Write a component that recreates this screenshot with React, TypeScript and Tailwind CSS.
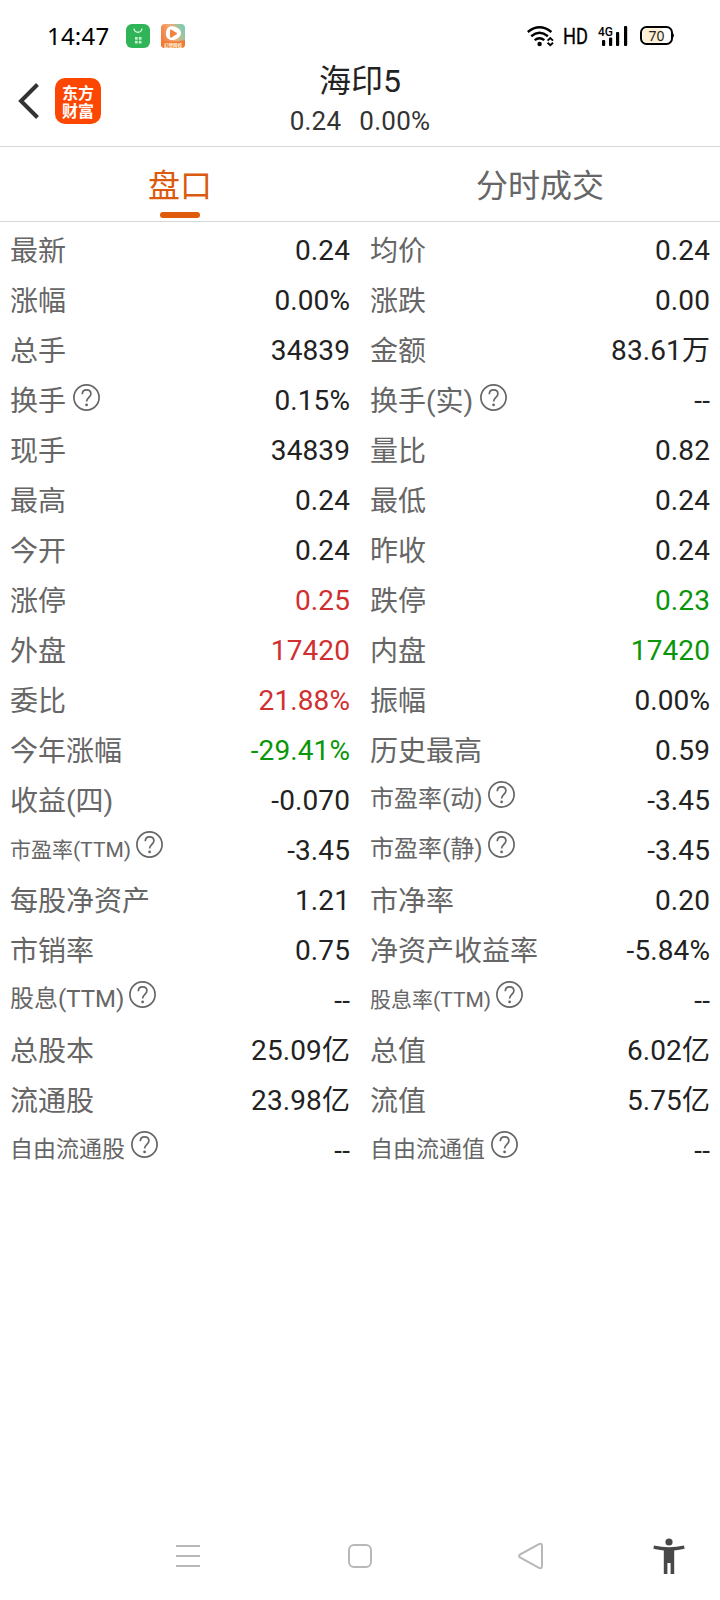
import { clsx } from "clsx"

type Cell = {
  label: string
  value: string
  tone?: "up" | "down"
  size?: "md" | "sm" | "xs"
  help?: boolean
}

const rows: [Cell, Cell][] = [
  [{ label: "最新", value: "0.24" }, { label: "均价", value: "0.24" }],
  [{ label: "涨幅", value: "0.00%" }, { label: "涨跌", value: "0.00" }],
  [{ label: "总手", value: "34839" }, { label: "金额", value: "83.61万" }],
  [{ label: "换手", value: "0.15%", help: true }, { label: "换手(实)", value: "--", help: true }],
  [{ label: "现手", value: "34839" }, { label: "量比", value: "0.82" }],
  [{ label: "最高", value: "0.24" }, { label: "最低", value: "0.24" }],
  [{ label: "今开", value: "0.24" }, { label: "昨收", value: "0.24" }],
  [{ label: "涨停", value: "0.25", tone: "up" }, { label: "跌停", value: "0.23", tone: "down" }],
  [{ label: "外盘", value: "17420", tone: "up" }, { label: "内盘", value: "17420", tone: "down" }],
  [{ label: "委比", value: "21.88%", tone: "up" }, { label: "振幅", value: "0.00%" }],
  [{ label: "今年涨幅", value: "-29.41%", tone: "down" }, { label: "历史最高", value: "0.59" }],
  [{ label: "收益(四)", value: "-0.070" }, { label: "市盈率(动)", value: "-3.45", size: "md", help: true }],
  [
    { label: "市盈率(TTM)", value: "-3.45", size: "xs", help: true },
    { label: "市盈率(静)", value: "-3.45", size: "md", help: true },
  ],
  [{ label: "每股净资产", value: "1.21" }, { label: "市净率", value: "0.20" }],
  [{ label: "市销率", value: "0.75" }, { label: "净资产收益率", value: "-5.84%" }],
  [
    { label: "股息(TTM)", value: "--", size: "md", help: true },
    { label: "股息率(TTM)", value: "--", size: "xs", help: true },
  ],
  [{ label: "总股本", value: "25.09亿" }, { label: "总值", value: "6.02亿" }],
  [{ label: "流通股", value: "23.98亿" }, { label: "流值", value: "5.75亿" }],
  [
    { label: "自由流通股", value: "--", size: "sm", help: true },
    { label: "自由流通值", value: "--", size: "sm", help: true },
  ],
]

function HelpIcon({ size }: { size?: Cell["size"] }) {
  return (
    <svg
      className={clsx(
        "shrink-0",
        !size && "mb-[7px] ml-[7px]",
        size === "sm" && "mb-[13px] ml-[6px]",
        (size === "md" || size === "xs") && "mb-[13px] ml-[5px]",
      )}
      width="27"
      height="27"
      viewBox="0 0 27 27"
      fill="none"
      stroke="#666"
      strokeWidth="1.7"
    >
      <circle cx="13.5" cy="13.5" r="12.6" />
      <path d="M9.3 10.2C9.3 7.500 11 5.800 13.600 5.800s4.300 1.700 4.300 4c0 3.400-4.300 3.900-4.300 7.800" />
      <circle cx="13.6" cy="20.9" r="1.4" fill="#666" stroke="none" />
    </svg>
  )
}

function QuoteCell({ label, value, tone, size, help }: Cell) {
  return (
    <div className="flex h-[50px] items-center justify-between px-[10px]">
      <div className="flex items-center whitespace-nowrap text-[#666]">
        <span
          className={clsx(
            !size && "mt-[1px] text-[28px]",
            size === "md" && "mb-[4px] text-[24px]",
            size === "sm" && "mb-[1px] text-[23px]",
            size === "xs" && "mb-[1px] text-[21px]",
          )}
        >
          {label}
        </span>
        {help && <HelpIcon size={size} />}
      </div>
      <span
        className={clsx(
          "text-[28px] tracking-[0.1px]",
          !tone && "text-[#222]",
          tone === "up" && "text-[#d03030]",
          tone === "down" && "text-[#0a960a]",
        )}
      >
        {value}
      </span>
    </div>
  )
}

function StatusBar() {
  return (
    <div className="flex h-[60px] items-center pt-3 pl-[47px] text-black">
      <span className="w-[79px] font-['Noto_Sans'] text-[24px] leading-none tracking-[0.2px]">14:47</span>
      <svg width="24" height="24" viewBox="0 0 24 24">
        <rect width="24" height="24" rx="6" fill="#2fb457" />
        <path d="M8 4.500c.8 5 7.200 5 8 0" fill="none" stroke="#d9f7df" strokeWidth="1.3" />
        <g fill="#c5f0cf">
          <rect x="9" y="13" width="2.700" height="2.700" />
          <rect x="12.800" y="13" width="2.700" height="2.700" />
          <rect x="9" y="16.800" width="2.700" height="2.700" />
          <rect x="12.800" y="16.800" width="2.700" height="2.700" />
        </g>
      </svg>
      <svg className="ml-[11px]" width="24" height="24" viewBox="0 0 24 24">
        <defs>
          <linearGradient id="video" x1="0" y1="0.6" x2="1" y2="0.2">
            <stop offset="0" stopColor="#f27a3c" />
            <stop offset="0.5" stopColor="#f3ab78" />
            <stop offset="1" stopColor="#6fd0b8" />
          </linearGradient>
        </defs>
        <rect width="24" height="24" rx="4" fill="url(#video)" />
        <path d="M0 16.500Q12 19 24 16v4a4 4 0 0 1-4 4H4a4 4 0 0 1-4-4z" fill="#ee7c37" />
        <path d="M9 2.500c5-1 11 2.500 11 6.500s-5 7.500-9.500 7S4.500 12 5 8.500s1.500-5.500 4-6z" fill="#fff" />
        <path d="M10 6.500l5 3-5 3.200z" fill="#f0843f" stroke="#f0843f" strokeWidth="2" strokeLinejoin="round" />
        <text x="12" y="22.600" textAnchor="middle" fontSize="4.500" fontWeight="700" fill="#fff3d8">
          幻想网校
        </text>
      </svg>
      <div className="ml-[342px] flex items-center">
        <svg width="27" height="21" viewBox="0 0 27 21" fill="none" stroke="#000" strokeWidth="2.400">
          <path d="M.8 6Q12.500-3.500 24.400 6" />
          <path d="M4.200 10.200Q12.500 3.400 20.900 10.200" />
          <path d="M7.700 14.200Q12.500 10.200 17.300 14.200" />
          <circle cx="12.600" cy="18" r="2.200" fill="#000" stroke="none" />
          <path d="M20.600 14.600l2.700-2.500 2.700 2.500M20.600 16.800l2.700 2.500 2.700-2.500" strokeWidth="1.900" />
        </svg>
        <svg className="ml-[8px]" width="28" height="40" viewBox="0 0 28 40">
          <text x="1" y="27.600" fontSize="22.500" stroke="#000" strokeWidth=".3" textLength="25" lengthAdjust="spacingAndGlyphs">
            HD
          </text>
        </svg>
        <svg className="ml-[8px]" width="30" height="30" viewBox="0 0 30 30">
          <text x="0" y="14.500" fontSize="13.500" fontWeight="500" textLength="15" lengthAdjust="spacingAndGlyphs">
            4G
          </text>
          <rect x="4" y="19" width="3.200" height="6" rx="1" />
          <rect x="11" y="16.500" width="3.200" height="8.500" rx="1" />
          <rect x="18" y="11" width="3.200" height="14" rx="1" />
          <rect x="26" y="5" width="3.200" height="20" rx="1" />
        </svg>
        <svg className="ml-[12px]" width="35" height="20" viewBox="0 0 35 20">
          <rect x="1" y="1" width="31" height="17" rx="5.500" fill="#fff" stroke="#000" strokeWidth="2" />
          <path d="M7 2.500h15v14H7a4.500 4.500 0 0 1-4.500-4.500V7A4.500 4.500 0 0 1 7 2.500z" fill="#fdf0d5" />
          <path d="M32 6q3 3.500 0 7z" stroke="#000" />
          <text
            x="8.500"
            y="15"
            fontSize="15"
            textLength="16"
            lengthAdjust="spacingAndGlyphs"
            fill="#222"
            className="font-['Noto_Sans']"
          >
            70
          </text>
        </svg>
      </div>
    </div>
  )
}

function Header() {
  return (
    <header className="grid h-[87px] grid-cols-[1fr_auto_1fr] border-b border-[#d5d8d8]">
      <div className="flex items-start pt-[18px] pl-[18px]">
        <svg className="mt-[4px]" width="22" height="38" viewBox="0 0 22 38" fill="none" stroke="#333" strokeWidth="4">
          <path d="M19.500 2.500L3 19l16.500 16.500" />
        </svg>
        <div className="ml-[15px] flex size-[46px] flex-col items-center justify-center rounded-[10px] bg-[#fc4703] font-['Noto_Sans_CJK_SC',sans-serif] text-[16px] leading-[18px] font-bold text-white">
          <span>东方</span>
          <span>财富</span>
        </div>
      </div>
      <div className="flex flex-col items-center text-[#222]">
        <h1 className="mt-px text-[32px] leading-[40px]">海印5</h1>
        <div className="flex gap-[18px] text-[26px] leading-[40px] tracking-[0.25px] text-[#333]">
          <span>0.24</span>
          <span>0.00%</span>
        </div>
      </div>
    </header>
  )
}

function NavBar() {
  return (
    <nav className="flex h-[90px] items-center pt-[2px] pl-[176px]">
      <svg width="24" height="24" viewBox="0 0 24 24" stroke="#b8b8b8" strokeWidth="2">
        <path d="M0 2h24M0 12h24M0 22h24" />
      </svg>
      <svg className="ml-[148px]" width="24" height="24" viewBox="0 0 24 24" fill="none" stroke="#b8b8b8" strokeWidth="2">
        <rect x="1" y="1" width="22" height="22" rx="5" />
      </svg>
      <svg className="ml-[146px]" width="26" height="28" viewBox="0 0 26 28" fill="none" stroke="#b8b8b8" strokeWidth="2">
        <path d="M2 12.500L20.500 2.300Q24 .8 24 4v20q0 3.200-3.500 1.700L2 15.500Q.2 14 2 12.500z" />
      </svg>
      <svg className="ml-[109px]" width="32" height="36" viewBox="0 0 32 36" fill="#484848">
        <circle cx="16" cy="4" r="3.600" />
        <path d="M1 7.500Q16 11 31 7.500l.6 3.200q-5 1.200-10.400 1.700V36h-3.600V25h-3.200v11h-3.600V12.400Q5.400 11.900.4 10.700z" />
      </svg>
    </nav>
  )
}

export default function App() {
  return (
    <div className="flex h-[1600px] w-[720px] flex-col bg-white font-[Roboto,'Noto_Sans_CJK_SC',sans-serif]">
      <StatusBar />
      <Header />
      <div className="grid h-[75px] grid-cols-2 border-b border-[#d5d8d8] text-[32px]">
        <button className="flex flex-col items-center justify-between pt-[15px] pb-[3px] leading-[48px] text-[#dc5a10]">
          盘口
          <span className="h-[6px] w-[40px] rounded-full bg-[#e05a0c]" />
        </button>
        <button className="flex justify-center pt-[15px] leading-[48px] text-[#666]">分时成交</button>
      </div>
      <main className="grid grow auto-rows-[50px] grid-cols-2 pt-[4px]">
        {rows.flat().map((cell) => (
          <QuoteCell key={cell.label} {...cell} />
        ))}
      </main>
      <NavBar />
    </div>
  )
}
